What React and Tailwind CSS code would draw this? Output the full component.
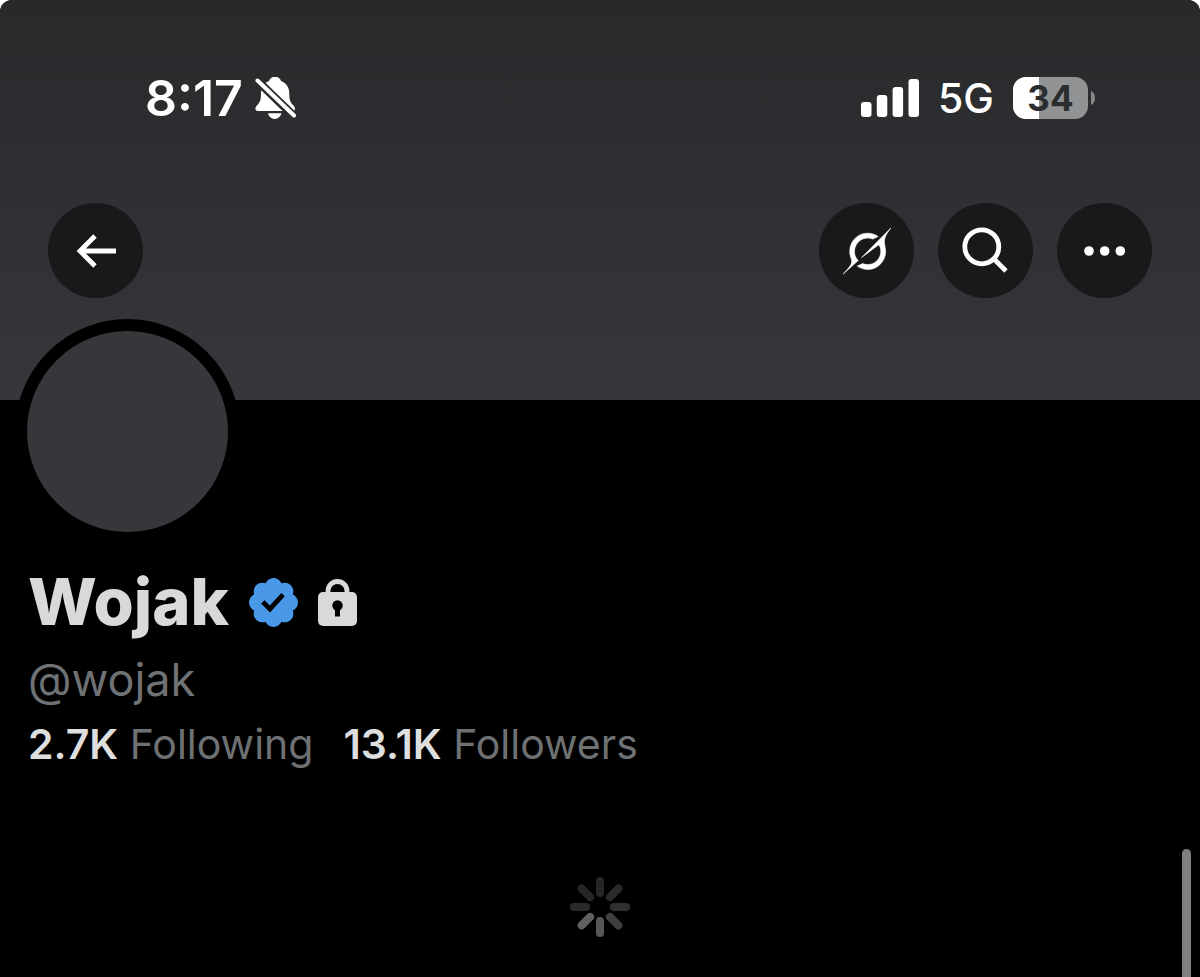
const STATS = [
  { value: "2.7K", label: "Following" },
  { value: "13.1K", label: "Followers" },
];

// brightness of each spinner arm, clockwise from the top
const SPINNER_ARMS = [
  "#262626",
  "#2a2a2a",
  "#303030",
  "#3f3f3f",
  "#565656",
  "#606060",
  "#2a2a2a",
  "#262626",
];

function BellOffIcon() {
  return (
    <svg viewBox="0 0 42 44" className="h-11 w-[42px]" fill="white" aria-hidden="true">
      <mask id="bell-cut">
        <rect width="42" height="44" fill="white" />
        <path d="M-2 .5 44 45" stroke="black" strokeWidth="8.500" />
      </mask>
      <g mask="url(#bell-cut)">
        <path d="M20 .8c-3 0-5.200 1.700-6 4.200C8.400 7.200 6 12 6 17.500c0 6-.8 8.500-3.600 11.500C1 30.500.4 31.600.4 32.700.4 34 1.400 35 3 35h34.200c1.700 0 2.800-1 2.800-2.300 0-1.100-.6-2.200-2-3.700-2.800-3-3.700-5.500-3.700-11.500 0-5.500-2.500-10.300-8.200-12.500-.8-2.500-3-4.200-6.100-4.200z" />
      </g>
      <path d="M13 37.300h13.400c-.7 3.300-3.500 5.700-6.700 5.700s-6-2.400-6.700-5.700z" />
      <path d="M2.500 4.500 39 39.500" stroke="white" strokeWidth="4" strokeLinecap="round" />
    </svg>
  );
}

function SignalIcon() {
  return (
    <svg viewBox="0 0 58 38" className="h-[38px] w-[58px]" fill="white" role="img" aria-label="Signal strength">
      <rect x="0" y="23" width="10.500" height="15" rx="3" />
      <rect x="15.800" y="16" width="10.500" height="22" rx="3" />
      <rect x="31.600" y="8" width="10.500" height="30" rx="3" />
      <rect x="47.500" y="0" width="10.500" height="38" rx="3" />
    </svg>
  );
}

function Battery({ level }) {
  return (
    <div className="flex items-center gap-[3px]">
      <div className="relative flex h-[42px] w-[75px] items-center justify-center overflow-hidden rounded-[13px] bg-[#919293]">
        <div className="absolute inset-y-0 left-0 bg-white" style={{ width: `${level}%` }} />
        <span className="relative text-[35px] leading-none font-bold text-[#2b2c2e]">{level}</span>
      </div>
      <svg viewBox="0 0 4 14" className="h-3.5 w-1" aria-hidden="true">
        <path d="M0 0c2.500 1 4 3.600 4 7s-1.500 6-4 7z" fill="#87888a" />
      </svg>
    </div>
  );
}

function StatusBar() {
  return (
    <div className="flex items-center justify-between pr-[105px] pl-[145px] text-white">
      <div className="flex items-center gap-3">
        <span className="text-[50px] leading-[44px] font-semibold">8:17</span>
        <BellOffIcon />
      </div>
      <div className="flex items-center gap-[19px]">
        <SignalIcon />
        <span className="text-[41px] leading-[44px] font-medium">5G</span>
        <Battery level={34} />
      </div>
    </div>
  );
}

function RoundButton({ label, children }) {
  return (
    <button
      type="button"
      aria-label={label}
      className="flex size-[95px] items-center justify-center rounded-full bg-[#18191a] text-white"
    >
      {children}
    </button>
  );
}

function BackIcon() {
  return (
    <svg viewBox="0 0 48 48" className="size-12" fill="none" stroke="currentColor" strokeWidth="4.800" aria-hidden="true">
      <path d="M44 24H8" />
      <path d="M23 9 8 24l15 15" />
    </svg>
  );
}

function GrokIcon() {
  return (
    <svg viewBox="0 0 33 32" className="size-12" fill="currentColor" stroke="currentColor" strokeWidth=".4" aria-hidden="true">
      <path d="M12.745 20.54l10.97-8.19c.539-.4 1.307-.244 1.564.38 1.349 3.288.746 7.241-1.938 9.955-2.683 2.714-6.417 3.31-9.83 1.954l-3.728 1.745c5.347 3.697 11.84 2.782 15.898-1.324 3.219-3.255 4.216-7.692 3.284-11.693l.008.009c-1.351-5.878.332-8.227 3.782-13.031L33 0l-4.54 4.59v-.014L12.743 20.544m-2.263 1.987c-3.837-3.707-3.175-9.446.1-12.755 2.42-2.449 6.388-3.448 9.852-1.979l3.72-1.737c-.67-.49-1.53-1.017-2.515-1.387-4.455-1.854-9.789-.931-13.41 2.728-3.483 3.523-4.579 8.94-2.697 13.561 1.405 3.454-.899 5.898-3.22 8.364C1.49 30.2.666 31.074 0 32l10.478-9.466" />
    </svg>
  );
}

function SearchIcon() {
  return (
    <svg viewBox="0 0 48 48" className="size-12" fill="none" stroke="currentColor" strokeWidth="4.800" aria-hidden="true">
      <circle cx="19.800" cy="19.800" r="17" />
      <path d="m31.500 31.500 12.500 12.500" />
    </svg>
  );
}

function MoreIcon() {
  return (
    <svg viewBox="0 0 48 48" className="size-12" fill="currentColor" aria-hidden="true">
      <circle cx="8" cy="24" r="4.800" />
      <circle cx="23.700" cy="24" r="4.800" />
      <circle cx="39.300" cy="24" r="4.800" />
    </svg>
  );
}

function VerifiedIcon() {
  return (
    <svg viewBox="1.6 1.6 18.8 18.8" className="size-[49px]" fill="#4a99e9" role="img" aria-label="Verified account">
      <path d="M20.396 11c-.018-.646-.215-1.275-.57-1.816-.354-.54-.852-.972-1.438-1.246.223-.607.27-1.264.14-1.897-.131-.634-.437-1.218-.882-1.687-.47-.445-1.053-.75-1.687-.882-.633-.13-1.29-.083-1.897.14-.273-.587-.704-1.086-1.245-1.44S11.647 1.62 11 1.604c-.646.017-1.273.213-1.813.568s-.969.854-1.24 1.44c-.608-.223-1.267-.272-1.902-.14-.635.13-1.22.436-1.69.882-.445.47-.749 1.055-.878 1.688-.13.633-.08 1.29.144 1.896-.587.274-1.087.705-1.443 1.245-.356.54-.555 1.17-.574 1.817.02.647.218 1.276.574 1.817.356.54.856.972 1.443 1.245-.224.606-.274 1.263-.144 1.896.13.634.433 1.218.877 1.688.47.443 1.054.747 1.687.878.633.132 1.29.084 1.897-.136.274.586.705 1.084 1.246 1.439.54.354 1.17.551 1.816.569.647-.016 1.276-.213 1.817-.567s.972-.854 1.245-1.44c.604.239 1.266.296 1.903.164.636-.132 1.22-.447 1.68-.907.46-.46.776-1.044.908-1.681s.075-1.299-.165-1.903c.586-.274 1.084-.705 1.439-1.246.354-.54.551-1.17.569-1.816zM9.662 14.85l-3.429-3.428 1.293-1.302 2.072 2.072 4.4-4.794 1.347 1.246z" />
    </svg>
  );
}

function LockIcon() {
  return (
    <svg viewBox="0 0 39 47" className="h-[47px] w-[39px]" role="img" aria-label="Protected account">
      <path d="M10 16v-4a9.500 9.500 0 0 1 19 0V16" fill="none" stroke="#d9d9d9" strokeWidth="4.800" />
      <rect y="13" width="39" height="34" rx="5" fill="#d9d9d9" />
      <circle cx="19.500" cy="26.500" r="5.200" fill="black" />
      <path d="M17 28h5v9.500h-5z" fill="black" />
    </svg>
  );
}

function Spinner() {
  return (
    <svg viewBox="-30 -30 60 60" className="size-[60px]" role="status" aria-label="Loading">
      {SPINNER_ARMS.map((color, i) => (
        <rect key={i} x="-4" y="-30" width="8" height="20" rx="4" fill={color} transform={`rotate(${i * 45})`} />
      ))}
    </svg>
  );
}

export default function App() {
  return (
    <div className="relative min-h-screen overflow-hidden rounded-t-xl bg-black font-['Inter',sans-serif]">
      <header className="h-[400px] bg-linear-to-b/srgb from-[#27292b] to-[#36373a] pt-[76px]">
        <StatusBar />
        <nav className="mt-[83px] flex items-center justify-between px-12">
          <RoundButton label="Back">
            <BackIcon />
          </RoundButton>
          <div className="flex gap-6">
            <RoundButton label="Grok">
              <GrokIcon />
            </RoundButton>
            <RoundButton label="Search">
              <SearchIcon />
            </RoundButton>
            <RoundButton label="More">
              <MoreIcon />
            </RoundButton>
          </div>
        </nav>
      </header>

      <main>
        <div className="relative -mt-[81px] ml-[15px] size-[225px] rounded-full border-12 border-black bg-[#36373a]" />

        <section className="mt-[22px] px-7">
          <div className="flex items-center gap-5">
            <h1 className="text-[65px] leading-[72px] font-extrabold text-[#d9d9d9]">Wojak</h1>
            <VerifiedIcon />
            <LockIcon />
          </div>
          <p className="mt-3 text-[45px] leading-[60px] text-[#6e7275]">@wojak</p>
          <div className="mt-1 flex gap-[30px] text-[41px] leading-[60px]">
            {STATS.map((s) => (
              <a key={s.label} href="#" className="text-[#6e7173]">
                <span className="font-semibold text-[#dedede]">{s.value}</span> {s.label}
              </a>
            ))}
          </div>
        </section>

        <div className="mt-[103px] flex justify-center">
          <Spinner />
        </div>
      </main>

      {/* scroll indicator */}
      <div className="absolute right-[9px] bottom-0 h-32 w-[9px] rounded-t-full bg-[#808080]" />
    </div>
  );
}
